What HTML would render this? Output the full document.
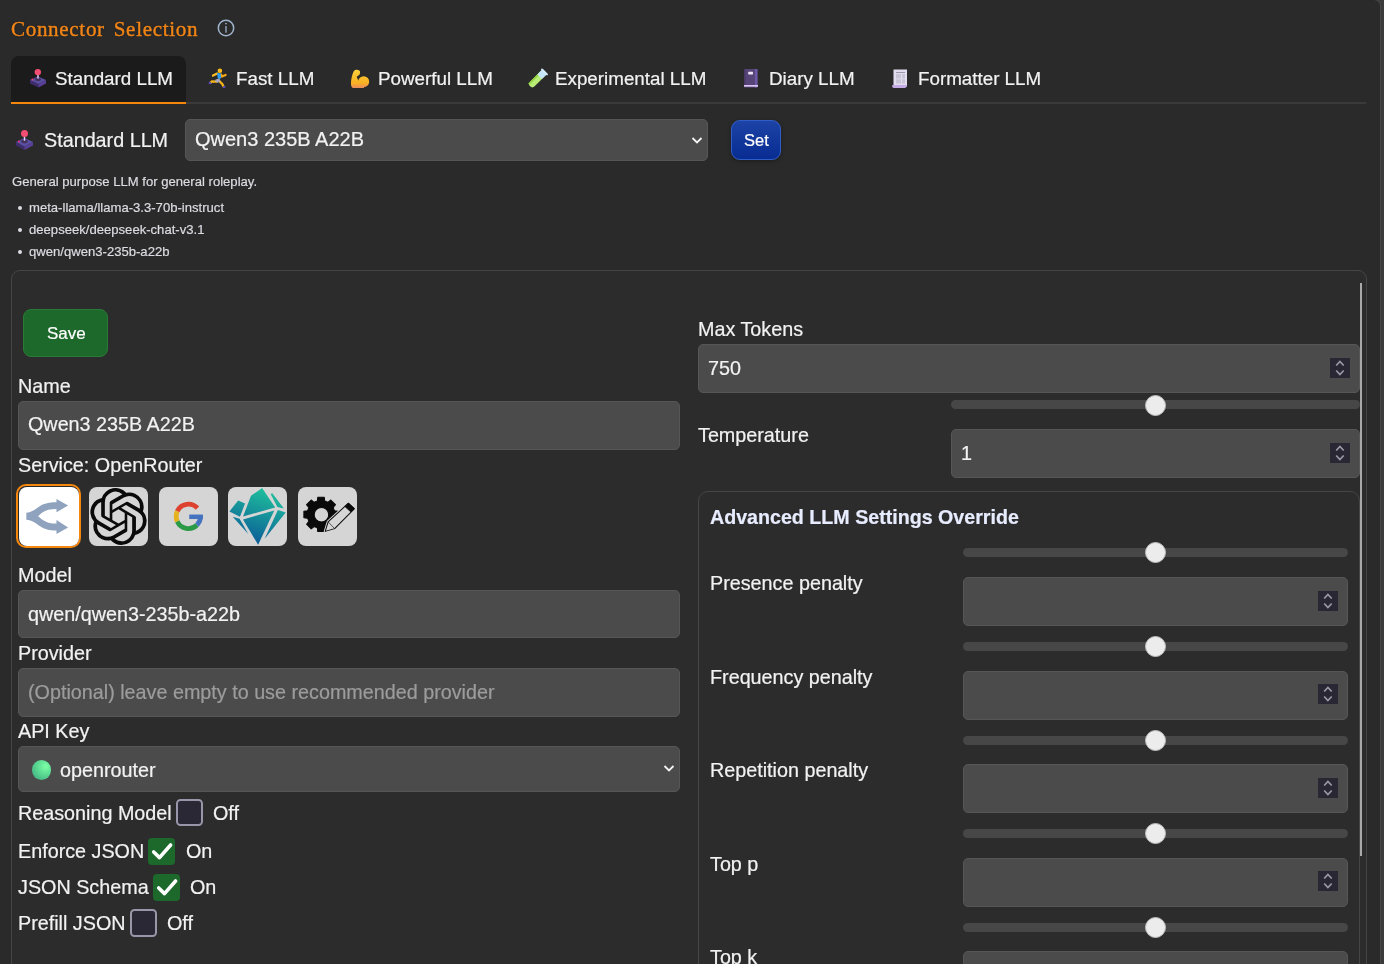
<!DOCTYPE html>
<html><head><meta charset="utf-8">
<style>
html,body{margin:0;padding:0;background:#2a2a2a;}
body{width:1384px;height:964px;overflow:hidden;position:relative;font-family:"Liberation Sans",sans-serif;color:#f2f2f2;}
.a{position:absolute;}
.t{position:absolute;white-space:nowrap;line-height:1;margin-left:-0.3px;will-change:transform;-webkit-text-stroke:0.2px currentColor;}
.lbl{font-size:19.75px;color:#f2f2f2;}
.inp{position:absolute;background:#4b4b4b;border:1px solid #565656;border-radius:5px;box-sizing:border-box;}
.tab{font-size:18.8px;color:#f2f2f2;}
.desc{font-size:13.1px;color:#dcdce2;}
.spin{position:absolute;width:20px;height:20px;background:#292733;}
.trk{position:absolute;height:9px;background:#474747;border-radius:5px;}
.thumb{position:absolute;width:21px;height:21px;border-radius:50%;background:#ececec;box-sizing:border-box;border:1px solid #bdbdbd;}
.svc{position:absolute;width:59px;height:59px;background:#d5d5d5;border-radius:8px;}
</style></head><body>

<!-- right page edge -->
<div class="a" style="left:1300px;top:-60px;width:200px;height:1100px;background:#3b3b3b"></div>
<div class="a" style="left:1200px;top:-1px;width:181px;height:1100px;box-sizing:border-box;border-top:1px solid #474747;border-right:1px solid #474747;border-radius:0 7px 0 0;background:#2a2a2a"></div>

<!-- title -->
<div class="t" style="left:11px;top:18.7px;font-family:'Liberation Serif',serif;font-size:21px;letter-spacing:0.7px;word-spacing:3px;-webkit-text-stroke:0.45px #f08516;color:#f08516;text-shadow:0 0 1.5px #0b1020;">Connector Selection</div>
<svg class="a" style="left:216.4px;top:18.3px" width="20" height="20" viewBox="0 0 20 20"><circle cx="10" cy="10" r="7.7" fill="none" stroke="#9fb3cc" stroke-width="1.5"/><rect x="9.35" y="8" width="1.3" height="6.8" rx="0.6" fill="#9fb3cc"/><circle cx="10" cy="5.6" r="0.85" fill="#9fb3cc"/></svg>

<!-- tabs -->
<div class="a" style="left:11px;top:56px;width:175px;height:47px;background:#1b1b1b;border-radius:8px 8px 0 0"></div>
<div class="a" style="left:11px;top:102px;width:1355px;height:2px;background:#3a3a3a"></div>
<div class="a" style="left:11px;top:101.6px;width:175px;height:2.4px;background:#f5870f"></div>

<div class="t tab" style="left:55px;top:69.5px">Standard LLM</div>
<div class="t tab" style="left:236px;top:69.5px">Fast LLM</div>
<div class="t tab" style="left:378px;top:69.5px">Powerful LLM</div>
<div class="t tab" style="left:555px;top:69.5px">Experimental LLM</div>
<div class="t tab" style="left:769px;top:69.5px">Diary LLM</div>
<div class="t tab" style="left:918px;top:69.5px">Formatter LLM</div>

<!-- joystick -->
<svg class="a" style="left:24px;top:64px" width="30" height="30" viewBox="0 0 30 30">
<polygon points="6,16 14.5,20 14.5,23.5 6,19.5" fill="#3e2c6c"/>
<polygon points="14.5,20 22,16 22,19.5 14.5,23.5" fill="#5a3f98"/>
<polygon points="6,16 14,12.5 22,16 14.5,20" fill="#5a51a6"/>
<ellipse cx="14" cy="15.5" rx="3" ry="1.7" fill="#45325e"/>
<rect x="13.3" y="10.5" width="1.4" height="4" fill="#e9d4ff"/>
<circle cx="13.8" cy="8.1" r="3.2" fill="#f24d72"/>
<circle cx="8.4" cy="15.5" r="0.9" fill="#ff2a6a"/>
</svg>
<!-- runner -->
<svg class="a" style="left:204px;top:64px" width="30" height="30" viewBox="0 0 30 30">
<g stroke-linecap="round" stroke-linejoin="round" fill="none">
<path d="M12.6,17.6 L8,17.4 L6.6,18.6" stroke="#f7b418" stroke-width="2.3"/>
<path d="M15.4,17.2 L18.3,20 L19.4,22.3" stroke="#f7b418" stroke-width="2.3"/>
<path d="M9,11.6 L13.2,9.4" stroke="#f9bd1f" stroke-width="2.3"/>
<path d="M17.2,10.6 L18,12.6 L21.6,10.9" stroke="#f5a814" stroke-width="2.2"/>
</g>
<polygon points="13.1,9 16.8,9.3 17,14 15.6,15.3 13.7,14.3" fill="#2b9df2"/>
<polygon points="11.5,15.6 15.6,14.6 16.3,17.4 13.7,18.7 11.2,17.4" fill="#aaa8bd"/>
<circle cx="15.9" cy="6.8" r="2.3" fill="#f9bb1c"/>
<ellipse cx="6" cy="19.2" rx="1.4" ry="1.1" fill="#5b4bc0"/>
<ellipse cx="20.2" cy="22.9" rx="1.5" ry="1" fill="#5b4bc0"/>
</svg>
<!-- muscle -->
<svg class="a" style="left:344px;top:64px" width="30" height="30" viewBox="0 0 30 30">
<defs><linearGradient id="mg" gradientUnits="userSpaceOnUse" x1="0" y1="5" x2="0" y2="24"><stop offset="0" stop-color="#fcd13a"/><stop offset=".75" stop-color="#f9b023"/><stop offset="1" stop-color="#ea8a5e"/></linearGradient></defs>
<g fill="url(#mg)">
<path d="M7,20 C7,15 8.3,9.5 10,6.9 C11,5.4 14,5.2 15.6,6.8 C16.6,8 16.1,10.4 14.6,11.6 L12.7,12.6 L13.8,15.5 L15,17 L15,24 L9.5,24 C7.8,24 7,22.3 7,20Z"/>
<circle cx="19.7" cy="17.7" r="5.5"/>
<rect x="9" y="18" width="11" height="6"/>
</g>
</svg>
<!-- test tube -->
<svg class="a" style="left:522px;top:64px" width="30" height="30" viewBox="0 0 30 30">
<g transform="rotate(45 15 15)">
<rect x="12" y="4" width="6.5" height="21" rx="3.2" fill="#b9ec74"/>
<rect x="12" y="4" width="6.5" height="7.5" fill="#c4e6fb"/>
<rect x="10.8" y="3.8" width="9" height="1.8" rx="0.9" fill="#d7eefc"/>
<rect x="12" y="11.5" width="1.6" height="13" fill="#8fd440"/>
</g>
</svg>
<!-- notebook -->
<svg class="a" style="left:736px;top:64px" width="30" height="30" viewBox="0 0 30 30">
<rect x="8" y="5" width="14" height="18.5" rx="1" fill="#57457a"/>
<rect x="8" y="5" width="1.6" height="16" fill="#4a3b66"/>
<rect x="19" y="5" width="2" height="18.5" fill="#6e58a8"/>
<rect x="12.2" y="7.8" width="4.8" height="2.6" rx="0.6" fill="#eee6f6"/>
<rect x="8" y="21" width="14" height="1.7" fill="#dcc4f4"/>
</svg>
<!-- receipt -->
<svg class="a" style="left:884px;top:64px" width="30" height="30" viewBox="0 0 30 30">
<rect x="9.5" y="5.5" width="13.5" height="17" fill="#e3ddf0"/>
<rect x="12" y="8" width="9" height="1" fill="#9c97a8"/>
<rect x="12" y="10" width="9" height="9.5" fill="#c9c4d6"/>
<rect x="17" y="10" width="1" height="9.5" fill="#e3ddf0"/>
<rect x="12" y="14.5" width="9" height="0.8" fill="#e3ddf0"/>
<path d="M8,21.5 Q8,24 10,24 L21,24 Q23,23.5 23,21 L9,21 Z" fill="#c6ace6"/>
</svg>

<!-- standard llm row -->
<svg class="a" style="left:10px;top:125px" width="30" height="30" viewBox="0 0 30 30">
<polygon points="6,17 14.5,21.5 14.5,25 6,20.5" fill="#3e2c6c"/>
<polygon points="14.5,21.5 23,17 23,20.5 14.5,25" fill="#5a3f98"/>
<polygon points="6,17 14.5,13 23,17 14.5,21.5" fill="#5a51a6"/>
<ellipse cx="14.5" cy="16.5" rx="3.3" ry="1.9" fill="#45325e"/>
<rect x="13.8" y="11.2" width="1.4" height="4.5" fill="#e9d4ff"/>
<circle cx="14.5" cy="8.5" r="3.5" fill="#f24d72"/>
<circle cx="8.8" cy="16.5" r="0.9" fill="#ff2a6a"/>
</svg>
<div class="t lbl" style="left:44px;top:130.5px">Standard LLM</div>
<div class="inp" style="left:185px;top:119px;width:523px;height:42px;border-radius:5px"></div>
<div class="t lbl" style="left:195px;top:128.7px;font-size:20px">Qwen3 235B A22B</div>
<svg class="a" style="left:690px;top:134.8px" width="14" height="12" viewBox="0 0 14 12"><path d="M2.5,3 L7,7.5 L11.5,3" fill="none" stroke="#f4f4f4" stroke-width="1.8"/></svg>
<div class="a" style="left:731px;top:120px;width:50px;height:40px;box-sizing:border-box;border:1px solid #2f5ec8;border-radius:9px;background:linear-gradient(#1d43a6,#082c92);box-shadow:0 1px 4px rgba(0,0,0,.35);"></div>
<div class="t" style="left:744px;top:132px;font-size:16.5px;color:#fff">Set</div>

<!-- description -->
<div class="t desc" style="left:12.4px;top:175px">General purpose LLM for general roleplay.</div>
<div class="a" style="left:17.5px;top:206px;width:4px;height:4px;border-radius:50%;background:#dcdce2"></div>
<div class="a" style="left:17.5px;top:228px;width:4px;height:4px;border-radius:50%;background:#dcdce2"></div>
<div class="a" style="left:17.5px;top:250px;width:4px;height:4px;border-radius:50%;background:#dcdce2"></div>
<div class="t desc" style="left:29.6px;top:201px">meta-llama/llama-3.3-70b-instruct</div>
<div class="t desc" style="left:29.6px;top:223px">deepseek/deepseek-chat-v3.1</div>
<div class="t desc" style="left:29.6px;top:245px">qwen/qwen3-235b-a22b</div>

<!-- container -->
<div class="a" style="left:11px;top:270px;width:1356px;height:760px;box-sizing:border-box;border:1px solid #454545;border-radius:9px;background:#2c2c2c"></div>
<div class="a" style="left:1360px;top:283px;width:2px;height:573px;background:#a9a9a9"></div>

<!-- left column -->
<div class="a" style="left:23px;top:309px;width:85px;height:48px;box-sizing:border-box;border:1px solid #2a7a37;border-radius:8px;background:#1c692b"></div>
<div class="t" style="left:47px;top:324.6px;font-size:17px;color:#fff">Save</div>

<div class="t lbl" style="left:18px;top:377px">Name</div>
<div class="inp" style="left:18px;top:401px;width:662px;height:49px"></div>
<div class="t lbl" style="left:28px;top:415px">Qwen3 235B A22B</div>

<div class="t lbl" style="left:18px;top:456px">Service: OpenRouter</div>

<!-- service icons -->
<div class="a" style="left:16px;top:484px;width:65px;height:64px;box-sizing:border-box;border:2px solid #f5870f;border-radius:10px;background:#2a2a2a"></div>
<div class="a" style="left:18.5px;top:486.5px;width:60px;height:59.5px;border-radius:8px;background:#fff"></div>
<svg class="a" style="left:14px;top:482px" width="70" height="70" viewBox="0 0 964 964">
<path d="M170,425 C250,415 300,370 360,330 C420,295 480,282 585,280 L585,235 L745,325 L585,415 L585,372 C500,372 440,385 385,425 C360,445 345,460 332,470 C345,480 360,495 385,515 C440,555 500,572 585,572 L585,525 L745,625 L585,715 L585,668 C480,668 420,650 360,610 C300,570 250,525 170,520 Z" fill="#8fa2be"/>
</svg>

<div class="svc" style="left:88.5px;top:486.5px"></div>
<svg class="a" style="left:90px;top:488px" width="57" height="57" viewBox="0 0 24 24"><path fill="#0a0a0a" d="M22.2819 9.8211a5.9847 5.9847 0 0 0-.5157-4.9108 6.0462 6.0462 0 0 0-6.5098-2.9A6.0651 6.0651 0 0 0 4.9807 4.1818a5.9847 5.9847 0 0 0-3.9977 2.9 6.0462 6.0462 0 0 0 .7427 7.0966 5.98 5.98 0 0 0 .511 4.9107 6.051 6.051 0 0 0 6.5146 2.9001A5.9847 5.9847 0 0 0 13.2599 24a6.0557 6.0557 0 0 0 5.7718-4.2058 5.9894 5.9894 0 0 0 3.9977-2.9001 6.0557 6.0557 0 0 0-.7475-7.0729zm-9.022 12.6081a4.4755 4.4755 0 0 1-2.8764-1.0408l.1419-.0804 4.7783-2.7582a.7948.7948 0 0 0 .3927-.6813v-6.7369l2.02 1.1686a.071.071 0 0 1 .038.052v5.5826a4.504 4.504 0 0 1-4.4945 4.4944zm-9.6607-4.1254a4.4708 4.4708 0 0 1-.5346-3.0137l.142.0852 4.783 2.7582a.7712.7712 0 0 0 .7806 0l5.8428-3.3685v2.3324a.0804.0804 0 0 1-.0332.0615L9.74 19.9502a4.4992 4.4992 0 0 1-6.1408-1.6464zM2.3408 7.8956a4.485 4.485 0 0 1 2.3655-1.9728V11.6a.7664.7664 0 0 0 .3879.6765l5.8144 3.3543-2.0201 1.1685a.0757.0757 0 0 1-.071 0l-4.8303-2.7865A4.504 4.504 0 0 1 2.3408 7.872zm16.5963 3.8558L13.1038 8.364 15.1192 7.2a.0757.0757 0 0 1 .071 0l4.8303 2.7913a4.4944 4.4944 0 0 1-.6765 8.1042v-5.6772a.79.79 0 0 0-.407-.667zm2.0107-3.0231l-.142-.0852-4.7735-2.7818a.7759.7759 0 0 0-.7854 0L9.409 9.2297V6.8974a.0662.0662 0 0 1 .0284-.0615l4.8303-2.7866a4.4992 4.4992 0 0 1 6.6802 4.66zM8.3065 12.863l-2.02-1.1638a.0804.0804 0 0 1-.038-.0567V6.0742a4.4992 4.4992 0 0 1 7.3757-3.4537l-.142.0805L8.704 5.459a.7948.7948 0 0 0-.3927.6813zm1.0976-2.3654l2.602-1.4998 2.6069 1.4998v2.9994l-2.5974 1.4997-2.6067-1.4997Z"/></svg>

<div class="svc" style="left:158.5px;top:486.5px"></div>
<svg class="a" style="left:154px;top:482px" width="70" height="70" viewBox="0 0 964 964">
<g fill="none" stroke-width="66">
<path d="M598,361 A168,168 0 0 0 320.7,402" stroke="#dd4230"/>
<path d="M320.7,402 A168,168 0 0 0 320.7,544" stroke="#e6b31e"/>
<path d="M320.7,544 A168,168 0 0 0 591.8,591.8" stroke="#2b9a47"/>
<path d="M591.8,591.8 A168,168 0 0 0 641,473" stroke="#4573bf"/>
</g>
<rect x="485" y="448" width="189" height="62" fill="#4573bf"/>
</svg>

<div class="svc" style="left:228px;top:486.5px"></div>
<svg class="a" style="left:224px;top:482px" width="70" height="70" viewBox="0 0 964 964">
<defs><linearGradient id="cg" gradientUnits="userSpaceOnUse" x1="640" y1="120" x2="380" y2="860"><stop offset="0" stop-color="#1fbf9c"/><stop offset="1" stop-color="#0a5a98"/></linearGradient></defs>
<g fill="url(#cg)">
<polygon points="75,405 195,255 290,295 220,480"/>
<polygon points="120,478 215,505 335,715"/>
<polygon points="262,475 372,190 525,82 705,350"/>
<polygon points="642,165 665,155 825,365 735,345"/>
<polygon points="742,385 850,420 560,780"/>
<polygon points="262,515 692,393 470,865"/>
</g>
</svg>

<div class="svc" style="left:298px;top:486.5px"></div>
<svg class="a" style="left:294px;top:482px" width="70" height="70" viewBox="0 0 964 964">
<path fill-rule="evenodd" fill="#0a0a0a" stroke="#0a0a0a" stroke-width="14" stroke-linejoin="round" d="M321,262 L327,211 L417,211 L423,262 L467,280 L507,248 L571,312 L539,352 L557,396 L608,402 L608,492 L557,498 L539,542 L571,582 L507,646 L467,614 L423,632 L417,683 L327,683 L321,632 L277,614 L237,646 L173,582 L205,542 L187,498 L136,492 L136,402 L187,396 L205,352 L173,312 L237,248 L277,280Z M478,450 A100,100 0 1 0 278,450 A100,100 0 1 0 478,450Z"/>
<polygon points="430,680 470,550 745,295 830,370 560,642" fill="#d6d6d6" stroke="#d6d6d6" stroke-width="40" stroke-linejoin="round"/>
<polygon points="430,680 470,550 745,295 830,370 560,642" fill="#d6d6d6" stroke="#0a0a0a" stroke-width="14" stroke-linejoin="round"/>
<polygon points="700,337 752,290 833,364 783,412" fill="#0a0a0a" stroke="#0a0a0a" stroke-width="10" stroke-linejoin="round"/>
<path d="M470,550 L560,642" stroke="#0a0a0a" stroke-width="9"/>
</svg>

<div class="t lbl" style="left:18px;top:566px">Model</div>
<div class="inp" style="left:18px;top:590px;width:662px;height:48px"></div>
<div class="t lbl" style="left:28px;top:604.8px">qwen/qwen3-235b-a22b</div>

<div class="t lbl" style="left:18px;top:644px">Provider</div>
<div class="inp" style="left:18px;top:668px;width:662px;height:49px"></div>
<div class="t lbl" style="left:28px;top:682.8px;color:#9c9c9c">(Optional) leave empty to use recommended provider</div>

<div class="t lbl" style="left:18px;top:722px">API Key</div>
<div class="inp" style="left:18px;top:746px;width:662px;height:46px"></div>
<div class="a" style="left:31.8px;top:760px;width:19.5px;height:19.5px;border-radius:50%;background:radial-gradient(circle at 72% 32%,#7cffa6,#5ad892 45%,#47b685 80%,#4aa8a0)"></div>
<div class="t lbl" style="left:60px;top:761px">openrouter</div>
<svg class="a" style="left:662px;top:763px" width="14" height="12" viewBox="0 0 14 12"><path d="M2.5,3 L7,7.5 L11.5,3" fill="none" stroke="#f4f4f4" stroke-width="1.8"/></svg>

<!-- checkboxes -->
<div class="t lbl" style="left:18px;top:803.5px">Reasoning Model</div>
<div class="a" style="left:176px;top:798.8px;width:27px;height:27.2px;box-sizing:border-box;border:2px solid #9896a8;border-radius:4.5px;background:#2a2834"></div>
<div class="t lbl" style="left:213px;top:803.5px">Off</div>

<div class="t lbl" style="left:18px;top:841.5px">Enforce JSON</div>
<div class="a" style="left:148px;top:838px;width:27px;height:27px;border-radius:4px;background:#1c692b"></div>
<svg class="a" style="left:148px;top:838px" width="27" height="27" viewBox="0 0 27 27"><path d="M5.7,14 L11.5,19.6 L22.6,7" fill="none" stroke="#fff" stroke-width="3.6" stroke-linecap="round" stroke-linejoin="round"/></svg>
<div class="t lbl" style="left:186px;top:841.5px">On</div>

<div class="t lbl" style="left:18px;top:877.5px">JSON Schema</div>
<div class="a" style="left:153px;top:874px;width:27px;height:27px;border-radius:4px;background:#1c692b"></div>
<svg class="a" style="left:153px;top:874px" width="27" height="27" viewBox="0 0 27 27"><path d="M5.7,14 L11.5,19.6 L22.6,7" fill="none" stroke="#fff" stroke-width="3.6" stroke-linecap="round" stroke-linejoin="round"/></svg>
<div class="t lbl" style="left:190.5px;top:877.5px">On</div>

<div class="t lbl" style="left:18px;top:913.5px">Prefill JSON</div>
<div class="a" style="left:130px;top:909.4px;width:27px;height:27.2px;box-sizing:border-box;border:2px solid #9896a8;border-radius:4.5px;background:#2a2834"></div>
<div class="t lbl" style="left:167px;top:913.5px">Off</div>

<!-- right column -->
<div class="t lbl" style="left:698px;top:320px">Max Tokens</div>
<div class="inp" style="left:698px;top:344px;width:662px;height:49px"></div>
<div class="t lbl" style="left:708px;top:358.5px">750</div>
<div class="trk" style="left:951px;top:400px;width:409px"></div>
<div class="thumb" style="left:1145px;top:394.5px"></div>

<div class="t lbl" style="left:698px;top:425.7px">Temperature</div>
<div class="inp" style="left:951px;top:429px;width:409px;height:49px"></div>
<div class="t lbl" style="left:961px;top:443.7px">1</div>

<div class="a" style="left:698px;top:491px;width:662px;height:600px;box-sizing:border-box;border:1px solid #464646;border-radius:10px"></div>
<div class="t" style="left:710px;top:508px;font-size:19.65px;font-weight:bold;color:#e8ecff">Advanced LLM Settings Override</div>

<div class="spin" style="left:1330px;top:358px"><svg width="20" height="20" viewBox="0 0 20 20"><path d="M6.2,7.5 L9.9,3.5 L13.7,7.5 M6.2,12.5 L9.9,16.5 L13.7,12.5" fill="none" stroke="#9b99aa" stroke-width="1.7"/></svg></div>
<div class="spin" style="left:1330px;top:443px"><svg width="20" height="20" viewBox="0 0 20 20"><path d="M6.2,7.5 L9.9,3.5 L13.7,7.5 M6.2,12.5 L9.9,16.5 L13.7,12.5" fill="none" stroke="#9b99aa" stroke-width="1.7"/></svg></div>
<div class="trk" style="left:963px;top:548.0px;width:385px"></div>
<div class="thumb" style="left:1145px;top:542.0px"></div>
<div class="t lbl" style="left:710px;top:573.8px">Presence penalty</div>
<div class="inp" style="left:963px;top:577.3px;width:385px;height:49px"></div>
<div class="spin" style="left:1318px;top:591px"><svg width="20" height="20" viewBox="0 0 20 20"><path d="M6.2,7.5 L9.9,3.5 L13.7,7.5 M6.2,12.5 L9.9,16.5 L13.7,12.5" fill="none" stroke="#9b99aa" stroke-width="1.7"/></svg></div>
<div class="trk" style="left:963px;top:641.8px;width:385px"></div>
<div class="thumb" style="left:1145px;top:635.8px"></div>
<div class="t lbl" style="left:710px;top:668.0px">Frequency penalty</div>
<div class="inp" style="left:963px;top:670.7px;width:385px;height:49px"></div>
<div class="spin" style="left:1318px;top:684px"><svg width="20" height="20" viewBox="0 0 20 20"><path d="M6.2,7.5 L9.9,3.5 L13.7,7.5 M6.2,12.5 L9.9,16.5 L13.7,12.5" fill="none" stroke="#9b99aa" stroke-width="1.7"/></svg></div>
<div class="trk" style="left:963px;top:735.5px;width:385px"></div>
<div class="thumb" style="left:1145px;top:729.5px"></div>
<div class="t lbl" style="left:710px;top:761.4px">Repetition penalty</div>
<div class="inp" style="left:963px;top:764.1px;width:385px;height:49px"></div>
<div class="spin" style="left:1318px;top:778px"><svg width="20" height="20" viewBox="0 0 20 20"><path d="M6.2,7.5 L9.9,3.5 L13.7,7.5 M6.2,12.5 L9.9,16.5 L13.7,12.5" fill="none" stroke="#9b99aa" stroke-width="1.7"/></svg></div>
<div class="trk" style="left:963px;top:829.2px;width:385px"></div>
<div class="thumb" style="left:1145px;top:823.2px"></div>
<div class="t lbl" style="left:710px;top:854.8px">Top p</div>
<div class="inp" style="left:963px;top:857.5px;width:385px;height:49px"></div>
<div class="spin" style="left:1318px;top:871px"><svg width="20" height="20" viewBox="0 0 20 20"><path d="M6.2,7.5 L9.9,3.5 L13.7,7.5 M6.2,12.5 L9.9,16.5 L13.7,12.5" fill="none" stroke="#9b99aa" stroke-width="1.7"/></svg></div>
<div class="trk" style="left:963px;top:923.0px;width:385px"></div>
<div class="thumb" style="left:1145px;top:917.0px"></div>
<div class="t lbl" style="left:710px;top:948.2px">Top k</div>
<div class="inp" style="left:963px;top:950.9px;width:385px;height:49px"></div>
<div class="spin" style="left:1318px;top:964px"><svg width="20" height="20" viewBox="0 0 20 20"><path d="M6.2,7.5 L9.9,3.5 L13.7,7.5 M6.2,12.5 L9.9,16.5 L13.7,12.5" fill="none" stroke="#9b99aa" stroke-width="1.7"/></svg></div>
</body></html>
